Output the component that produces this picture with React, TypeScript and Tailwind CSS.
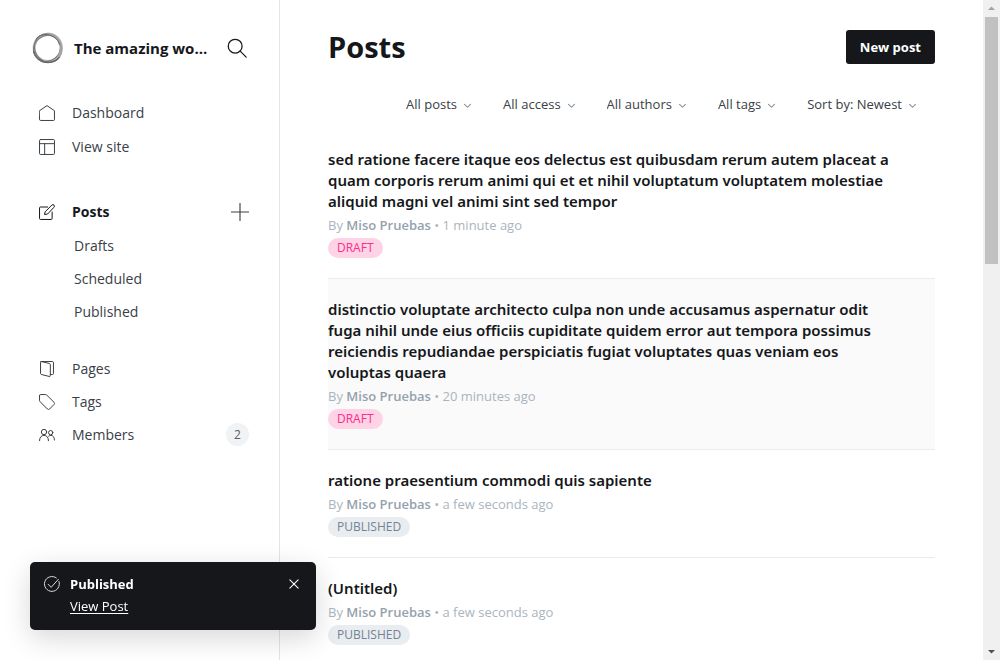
import type { ReactNode } from "react";

function Icon({ children, className = "", size = 16 }: { children: ReactNode; className?: string; size?: number }) {
  return (
    <svg
      viewBox="0 0 24 24"
      width={size}
      height={size}
      fill="none"
      stroke="currentColor"
      strokeWidth="1.5"
      strokeLinecap="round"
      strokeLinejoin="round"
      aria-hidden="true"
      className={`shrink-0 ${className}`}
    >
      {children}
    </svg>
  );
}

function Logo() {
  return (
    <svg viewBox="0 0 32 32" className="size-8 shrink-0" fill="none" aria-hidden="true">
      <circle cx="15.800" cy="16" r="13.600" stroke="#999" strokeWidth="3" opacity=".7" />
      <ellipse cx="15" cy="16.4" rx="14" ry="12.6" stroke="#777" strokeWidth="1" transform="rotate(-38 15 16.4)" />
      <ellipse cx="16" cy="16" rx="14.600" ry="13.200" stroke="#777" strokeWidth="1" transform="rotate(58 16 16)" />
      <path d="M1.500 19c2 7 7.500 11.500 14.500 11.500 5 0 9-2 12-6" stroke="#666" strokeWidth="1.3" />
      <path d="M15 2c8 0 14 5 14 15 0 3-1 6-2.500 8" stroke="#aaa" strokeWidth="2.800" opacity=".8" />
      <path d="M4 7C8 2 16 1 22 5c3 2 5 5 5.500 8" stroke="#666" strokeWidth="1" />
    </svg>
  );
}

const icons = {
  home: <path d="M.8 8.6 12 .9l11.2 7.7v13.2a1.4 1.4 0 0 1-1.4 1.4H2.2a1.4 1.4 0 0 1-1.4-1.4Z" />,
  site: (
    <>
      <rect x=".8" y=".8" width="22.4" height="22.4" rx="1.5" />
      <path d="M.8 7h22.4M8.5 7v16.2" />
    </>
  ),
  edit: (
    <>
      <path d="M13 4.5H2.3A1.5 1.5 0 0 0 .8 6v15.7a1.5 1.5 0 0 0 1.5 1.5h15.9a1.5 1.5 0 0 0 1.5-1.5V12" />
      <path d="m12.5 15-4.2.9.9-4.2L19.3 1.6a2.3 2.3 0 0 1 3.2 0 2.3 2.3 0 0 1 0 3.2Z" />
    </>
  ),
  pages: (
    <>
      <path d="M3.2.8h17a1.5 1.5 0 0 1 1.5 1.5v16.5a1.5 1.5 0 0 1-1.5 1.5H17" />
      <path d="m3.3.8 12.2 2.9A2 2 0 0 1 17 5.600v16.100a1.500 1.500 0 0 1-2 1.400L3.400 20.200A1.600 1.600 0 0 1 2.300 18.700V1.800a1 1 0 0 1 1-1Z" />
    </>
  ),
  tag: <path d="M.8 2.300v7.200a3 3 0 0 0 .9 2.100l10.900 10.900a2.200 2.200 0 0 0 3.200 0l6.800-6.800a2.200 2.200 0 0 0 0-3.200L11.700 1.700A3 3 0 0 0 9.600.8H2.300A1.500 1.500 0 0 0 .8 2.300Z" />,
  members: (
    <>
      <circle cx="7.500" cy="7.500" r="4" />
      <circle cx="17.500" cy="8.500" r="3.200" />
      <path d="M.8 20.500c0-5 2.700-8 6.700-8s6.700 3 6.700 8M14.500 13.800c1-.9 2-1.300 3.300-1.300 3.300 0 5.400 2.900 5.400 7" />
    </>
  ),
};

function NavItem({ icon, label, children }: { icon: ReactNode; label: string; children?: ReactNode }) {
  return (
    <li className="flex h-[33px] items-center justify-between">
      <a href="#" className="flex items-center gap-[17px]">
        <Icon>{icon}</Icon>
        {label}
      </a>
      {children}
    </li>
  );
}

const filters = [
  { label: "Post type", value: "All posts" },
  { label: "Access", value: "All access" },
  { label: "Author", value: "All authors" },
  { label: "Tag", value: "All tags" },
  { label: "Order", value: "Sort by: Newest" },
];

const posts = [
  {
    title:
      "sed ratione facere itaque eos delectus est quibusdam rerum autem placeat a quam corporis rerum animi qui et et nihil voluptatum voluptatem molestiae aliquid magni vel animi sint sed tempor",
    time: "1 minute ago",
    status: "DRAFT",
  },
  {
    title:
      "distinctio voluptate architecto culpa non unde accusamus aspernatur odit fuga nihil unde eius officiis cupiditate quidem error aut tempora possimus reiciendis repudiandae perspiciatis fugiat voluptates quas veniam eos voluptas quaera",
    time: "20 minutes ago",
    status: "DRAFT",
    active: true,
  },
  { title: "ratione praesentium commodi quis sapiente", time: "a few seconds ago", status: "PUBLISHED" },
  { title: "(Untitled)", time: "a few seconds ago", status: "PUBLISHED" },
];

function Sidebar() {
  return (
    <aside className="w-[280px] shrink-0 border-r border-[#e5e5e5] pt-8 pr-[30px] pl-8 text-sm text-[#394047]">
      <div className="flex items-center pr-[2px]">
        <Logo />
        <span className="ml-[10px] text-[15px] leading-5 font-bold whitespace-nowrap text-[#15171a]">
          The amazing wo...
        </span>
        <button type="button" aria-label="Search" className="ml-auto text-[#15171a]">
          <Icon size={20}>
            <circle cx="9.800" cy="9.800" r="8.300" />
            <path d="m15.800 15.800 7.200 7.200" />
          </Icon>
        </button>
      </div>
      <nav className="pl-[7px]">
        <ul className="mt-8 flex flex-col gap-px">
          <NavItem icon={icons.home} label="Dashboard" />
          <NavItem icon={icons.site} label="View site" />
        </ul>
        <div className="mt-8 flex h-[34px] items-center justify-between">
          <a href="#" className="flex items-center gap-[17px] font-bold text-[#15171a]">
            <Icon>{icons.edit}</Icon>
            Posts
          </a>
          <button type="button" aria-label="New post" className="text-[#394047]">
            <Icon size={18}>
              <path d="M12 .5v23M.5 12h23" />
            </Icon>
          </button>
        </div>
        <ul className="pl-[35px]">
          {["Drafts", "Scheduled", "Published"].map((name) => (
            <li key={name} className="flex h-[33px] items-center">
              <a href="#">{name}</a>
            </li>
          ))}
        </ul>
        <ul className="mt-6">
          <NavItem icon={icons.pages} label="Pages" />
          <NavItem icon={icons.tag} label="Tags" />
          <NavItem icon={icons.members} label="Members">
            <span className="flex h-[23px] min-w-[23px] items-center justify-center rounded-full bg-[#f0f2f4] text-xs font-medium text-[#54606b]">
              2
            </span>
          </NavItem>
        </ul>
      </nav>
    </aside>
  );
}

function Toast() {
  return (
    <div
      role="status"
      className="fixed bottom-[30px] left-[30px] flex h-[68px] w-[286px] items-start rounded-[5px] bg-[#15171a] px-[14px] pt-3 text-[13px] leading-5 text-white shadow-[0_8px_28px_rgba(0,0,0,0.16)]"
    >
      <Icon className="mt-[2px] text-[#d8dadc]">
        <path d="M22.500 8.200A11.200 11.200 0 1 1 18.500 2.800" />
        <path d="m6.300 12.500 4.400 4.500L21.500 5" />
      </Icon>
      <div className="ml-[10px] flex flex-col items-start gap-[2px]">
        <strong>Published</strong>
        <a href="#" className="underline underline-offset-2">
          View Post
        </a>
      </div>
      <button type="button" aria-label="Close" className="mt-[5px] mr-[3px] ml-auto">
        <Icon size={10}>
          <path d="m2 2 20 20M22 2 2 22" strokeWidth="2.500" />
        </Icon>
      </button>
    </div>
  );
}

function Scrollbar() {
  return (
    <div aria-hidden="true" className="flex w-[17px] shrink-0 flex-col items-center bg-[#f0f0f0]">
      <svg viewBox="0 0 17 17" className="size-[17px] shrink-0" fill="#a3a3a3">
        <path d="M5 10h7L8.500 6.500Z" />
      </svg>
      <div className="h-[247px] w-[13px] bg-[#c1c1c1]" />
      <svg viewBox="0 0 17 17" className="mt-auto size-[17px] shrink-0" fill="#505050">
        <path d="M5 7h7l-3.500 3.500Z" />
      </svg>
    </div>
  );
}

export default function App() {
  return (
    <div className="flex h-screen overflow-hidden bg-white font-['Open_Sans','Noto_Sans',sans-serif] text-[#15171a]">
      <Sidebar />
      <main className="min-w-0 flex-1 overflow-hidden pt-[30px] pr-12 pl-12">
        <header className="flex h-[34px] items-center justify-between">
          <h1 className="text-[29px] leading-[34px] font-bold">Posts</h1>
          <a
            href="#"
            className="flex h-[34px] items-center rounded-[3px] bg-[#15171a] px-[14px] pt-px text-[13px] font-bold text-white"
          >
            New post
          </a>
        </header>
        <div className="mt-7 mr-[19px] mb-[11px] flex h-[26px] items-center justify-end gap-8 text-[13px] text-[#394047]">
          {filters.map(({ label, value }) => (
            <div key={label} className="relative flex items-center">
              <select aria-label={label} className="field-sizing-content appearance-none bg-transparent pr-[14px]">
                <option>{value}</option>
              </select>
              <Icon size={7} className="pointer-events-none absolute right-0 text-[#7c8b9a]">
                <path d="m2 8 10 10L22 8" strokeWidth="3.500" />
              </Icon>
            </div>
          ))}
        </div>
        <ol>
          {posts.map(({ title, time, status, active }) => (
            <li key={title} className={`border-b border-[#e9ebec] py-5 ${active ? "bg-[#fafafa]" : ""}`}>
              <h3 className="pr-[39px] font-['Noto_Sans','Open_Sans',sans-serif] text-[15px] leading-[21px] font-semibold">
                {title}
              </h3>
              <p className="text-[13px] leading-[26px] text-[#abb4be]">
                By <span className="font-semibold text-[#95a1ad]">Miso Pruebas</span> • {time}
              </p>
              <span
                className={`flex h-5 w-fit items-center rounded-full px-[9px] text-xs font-medium ${
                  status === "DRAFT" ? "bg-[#ffd3e6] text-[#fb2d8d]" : "bg-[#e9edf0] text-[#738393]"
                }`}
              >
                {status}
              </span>
            </li>
          ))}
        </ol>
      </main>
      <Scrollbar />
      <Toast />
    </div>
  );
}
